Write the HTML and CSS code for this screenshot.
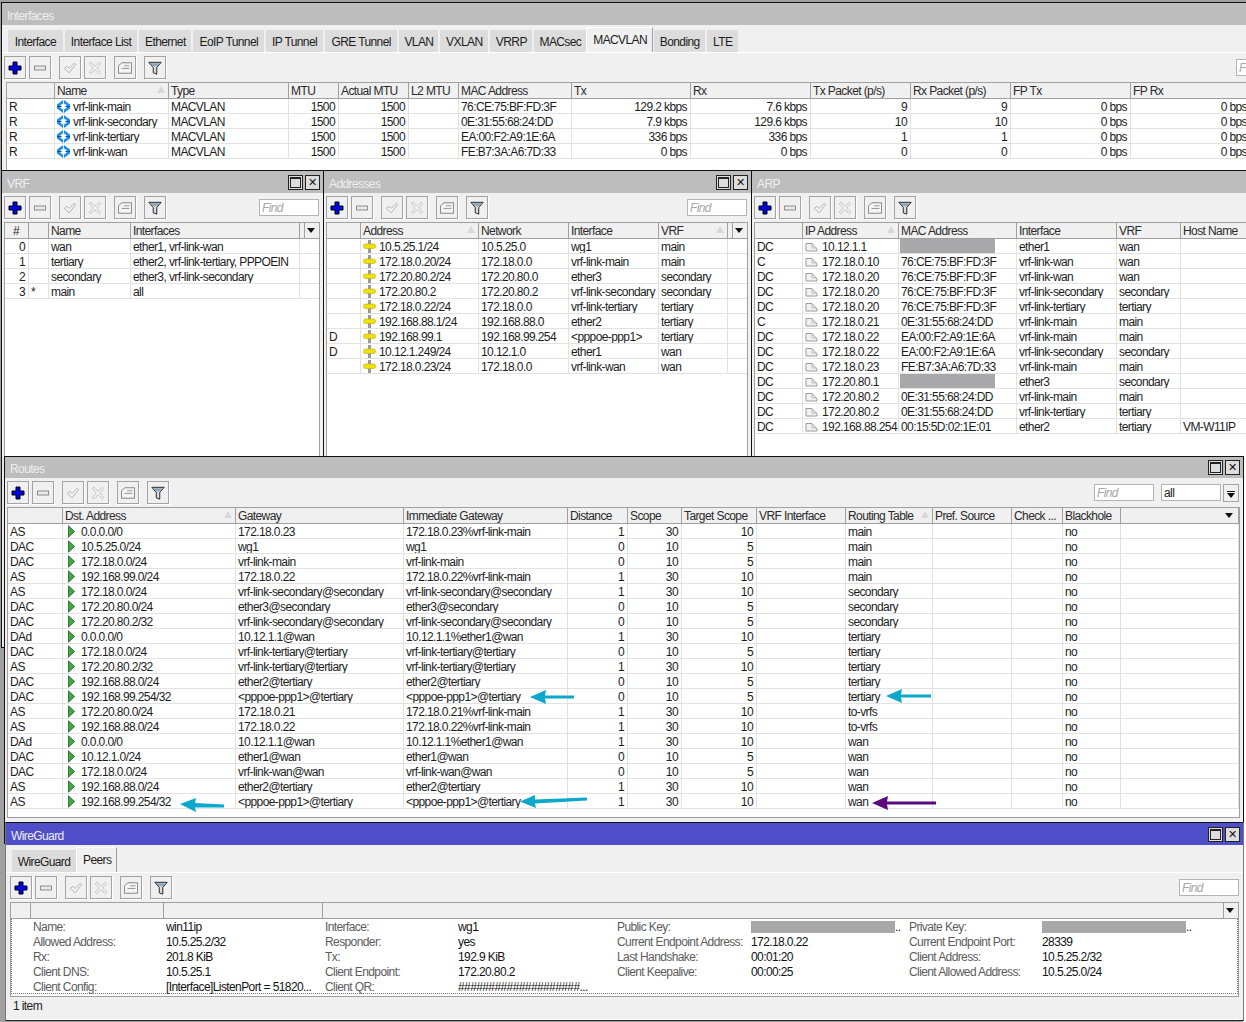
FILE: index.html
```html
<!DOCTYPE html>
<html>
<head>
<meta charset="UTF-8">
<title>WinBox</title>
<link rel="stylesheet" href="styles.css">
</head>
<body>
<svg class="sprite" xmlns="http://www.w3.org/2000/svg">
	<symbol id="add" viewBox="0 0 14 14"><path d="M5 1h4v4h4v4H9v4H5V9H1V5h4z" fill="#0000e6" stroke="#000" stroke-width="1"/></symbol>
	<symbol id="del" viewBox="0 0 14 14"><rect x="1.5" y="5" width="11" height="4" fill="#e8e8e8" stroke="#8c8c8c"/></symbol>
	<symbol id="chk" viewBox="0 0 16 16"><path d="M1.5 8.5l3-2.5 2.5 2.5 6-6 1.5 1.5-7.5 9.5z" fill="#f4f4f4" stroke="#a8a8a8"/></symbol>
	<symbol id="cross" viewBox="0 0 16 16"><path d="M3 1.5l5 4.5 5-4.5 1.5 1.5-4.5 5 4.5 5-1.5 1.5-5-4.5-5 4.5-1.5-1.5 4.5-5-4.5-5z" fill="#f4f4f4" stroke="#a0a0a0" stroke-dasharray="2 1"/></symbol>
	<symbol id="note" viewBox="0 0 16 14"><path d="M.5 13V4.500l4-3.500h11v12z" fill="#f4f4f4" stroke="#777"/><path d="M7 4.500h6M4 7.500h9" stroke="#888"/></symbol>
	<symbol id="funnel" viewBox="0 0 16 16"><path d="M1 1.500h14l-5 6v7.500l-4-1.500V7.500z" fill="#d5dde3" stroke="#111"/><path d="M2.500 2.500h11l-3 3.500h-5z" fill="#8fa6ba"/></symbol>
	<symbol id="iface" viewBox="0 0 13 13"><path d="M6 0L0 4.500v4L6 13V9.500L3.500 8V5L6 3.500zM7 0l6 4.500v4L7 13V9.500L9.500 8V5L7 3.500z" fill="#1c8fec"/><path d="M0 6.500h4.500M8.500 6.500H13" stroke="#0b4f9c"/></symbol>
	<symbol id="addr" viewBox="0 0 13 13"><path d="M5 0h3v13H5z" fill="#9a9a9a"/><rect x=".5" y="4" width="12" height="4.500" rx="2" fill="#f2e200" stroke="#b5ab20" stroke-width=".6"/></symbol>
	<symbol id="arp" viewBox="0 0 13 13"><path d="M1 11V3.500h6L12 9v2z" fill="#f2f2f2" stroke="#9a9a9a"/><path d="M7 3.500V8h5" fill="none" stroke="#b8b8b8"/></symbol>
	<symbol id="route" viewBox="0 0 8 14"><path d="M.5 .5L7.500 7 .5 13.500z" fill="#35b135" stroke="#3d5a3d"/></symbol>
</svg>

<div class="desk">
	<div class="strip"></div>
	<div class="under"></div>

	<div class="win win-if">
		<div class="title">Interfaces</div>
		<div class="tabs">
			<span class="tab wide">Interface</span>
			<span class="tab mid">Interface List</span>
			<span class="tab">Ethernet</span>
			<span class="tab mid">EoIP Tunnel</span>
			<span class="tab">IP Tunnel</span>
			<span class="tab wide">GRE Tunnel</span>
			<span class="tab thin">VLAN</span>
			<span class="tab">VXLAN</span>
			<span class="tab">VRRP</span>
			<span class="tab thin">MACsec</span>
			<span class="tab tab-on">MACVLAN</span>
			<span class="tab">Bonding</span>
			<span class="tab">LTE</span>
		</div>
		<div class="tools">
			<button class="btn"><svg class="ti"><use href="#add"/></svg></button>
			<button class="btn"><svg class="ti"><use href="#del"/></svg></button>
			<button class="btn sep"><svg class="ti"><use href="#chk"/></svg></button>
			<button class="btn"><svg class="ti"><use href="#cross"/></svg></button>
			<button class="btn sep"><svg class="ti"><use href="#note"/></svg></button>
			<button class="btn sep"><svg class="ti"><use href="#funnel"/></svg></button>
			<input class="find" placeholder="Find">
		</div>
		<div class="list">
			<table class="t-if">
				<colgroup><col><col><col><col><col><col><col><col><col><col><col><col><col></colgroup>
				<tr><th></th><th><span class="sort"></span>Name</th><th>Type</th><th>MTU</th><th>Actual MTU</th><th>L2 MTU</th><th>MAC Address</th><th>Tx</th><th>Rx</th><th>Tx Packet (p/s)</th><th>Rx Packet (p/s)</th><th>FP Tx</th><th>FP Rx</th></tr>
				<tr><td>R</td><td><svg class="ic"><use href="#iface"/></svg>vrf-link-main</td><td>MACVLAN</td><td class="n">1500</td><td class="n">1500</td><td></td><td>76:CE:75:BF:FD:3F</td><td class="n">129.2 kbps</td><td class="n">7.6 kbps</td><td class="n">9</td><td class="n">9</td><td class="n">0 bps</td><td class="n">0 bps</td></tr>
				<tr><td>R</td><td><svg class="ic"><use href="#iface"/></svg>vrf-link-secondary</td><td>MACVLAN</td><td class="n">1500</td><td class="n">1500</td><td></td><td>0E:31:55:68:24:DD</td><td class="n">7.9 kbps</td><td class="n">129.6 kbps</td><td class="n">10</td><td class="n">10</td><td class="n">0 bps</td><td class="n">0 bps</td></tr>
				<tr><td>R</td><td><svg class="ic"><use href="#iface"/></svg>vrf-link-tertiary</td><td>MACVLAN</td><td class="n">1500</td><td class="n">1500</td><td></td><td>EA:00:F2:A9:1E:6A</td><td class="n">336 bps</td><td class="n">336 bps</td><td class="n">1</td><td class="n">1</td><td class="n">0 bps</td><td class="n">0 bps</td></tr>
				<tr><td>R</td><td><svg class="ic"><use href="#iface"/></svg>vrf-link-wan</td><td>MACVLAN</td><td class="n">1500</td><td class="n">1500</td><td></td><td>FE:B7:3A:A6:7D:33</td><td class="n">0 bps</td><td class="n">0 bps</td><td class="n">0</td><td class="n">0</td><td class="n">0 bps</td><td class="n">0 bps</td></tr>
			</table>
		</div>
	</div>

	<div class="win win-vrf">
		<div class="title">VRF<span class="ctl"><i class="max"></i><i class="close">✕</i></span></div>
		<div class="tools">
			<button class="btn"><svg class="ti"><use href="#add"/></svg></button>
			<button class="btn"><svg class="ti"><use href="#del"/></svg></button>
			<button class="btn sep"><svg class="ti"><use href="#chk"/></svg></button>
			<button class="btn"><svg class="ti"><use href="#cross"/></svg></button>
			<button class="btn sep"><svg class="ti"><use href="#note"/></svg></button>
			<button class="btn sep"><svg class="ti"><use href="#funnel"/></svg></button>
			<input class="find" placeholder="Find">
		</div>
		<div class="list">
			<table class="t-vrf">
				<colgroup><col><col><col><col><col></colgroup>
				<tr><th class="c">#</th><th></th><th>Name</th><th>Interfaces</th><th class="more"><span class="dd boxed"></span></th></tr>
				<tr><td class="n">0</td><td></td><td>wan</td><td>ether1, vrf-link-wan</td><td></td></tr>
				<tr><td class="n">1</td><td></td><td>tertiary</td><td>ether2, vrf-link-tertiary, PPPOEIN</td><td></td></tr>
				<tr><td class="n">2</td><td></td><td>secondary</td><td>ether3, vrf-link-secondary</td><td></td></tr>
				<tr><td class="n">3</td><td>*</td><td>main</td><td>all</td><td></td></tr>
			</table>
		</div>
	</div>

	<div class="win win-addr">
		<div class="title">Addresses<span class="ctl"><i class="max"></i><i class="close">✕</i></span></div>
		<div class="tools">
			<button class="btn"><svg class="ti"><use href="#add"/></svg></button>
			<button class="btn"><svg class="ti"><use href="#del"/></svg></button>
			<button class="btn sep"><svg class="ti"><use href="#chk"/></svg></button>
			<button class="btn"><svg class="ti"><use href="#cross"/></svg></button>
			<button class="btn sep"><svg class="ti"><use href="#note"/></svg></button>
			<button class="btn sep"><svg class="ti"><use href="#funnel"/></svg></button>
			<input class="find" placeholder="Find">
		</div>
		<div class="list">
			<table class="t-addr">
				<colgroup><col><col><col><col><col><col></colgroup>
				<tr><th></th><th><span class="sort"></span>Address</th><th>Network</th><th>Interface</th><th><span class="sort"></span>VRF</th><th class="more"><span class="dd boxed"></span></th></tr>
				<tr><td></td><td><svg class="ic"><use href="#addr"/></svg>10.5.25.1/24</td><td>10.5.25.0</td><td>wg1</td><td>main</td><td></td></tr>
				<tr><td></td><td><svg class="ic"><use href="#addr"/></svg>172.18.0.20/24</td><td>172.18.0.0</td><td>vrf-link-main</td><td>main</td><td></td></tr>
				<tr><td></td><td><svg class="ic"><use href="#addr"/></svg>172.20.80.2/24</td><td>172.20.80.0</td><td>ether3</td><td>secondary</td><td></td></tr>
				<tr><td></td><td><svg class="ic"><use href="#addr"/></svg>172.20.80.2</td><td>172.20.80.2</td><td>vrf-link-secondary</td><td>secondary</td><td></td></tr>
				<tr><td></td><td><svg class="ic"><use href="#addr"/></svg>172.18.0.22/24</td><td>172.18.0.0</td><td>vrf-link-tertiary</td><td>tertiary</td><td></td></tr>
				<tr><td></td><td><svg class="ic"><use href="#addr"/></svg>192.168.88.1/24</td><td>192.168.88.0</td><td>ether2</td><td>tertiary</td><td></td></tr>
				<tr><td>D</td><td><svg class="ic"><use href="#addr"/></svg>192.168.99.1</td><td>192.168.99.254</td><td>&lt;pppoe-ppp1&gt;</td><td>tertiary</td><td></td></tr>
				<tr><td>D</td><td><svg class="ic"><use href="#addr"/></svg>10.12.1.249/24</td><td>10.12.1.0</td><td>ether1</td><td>wan</td><td></td></tr>
				<tr><td></td><td><svg class="ic"><use href="#addr"/></svg>172.18.0.23/24</td><td>172.18.0.0</td><td>vrf-link-wan</td><td>wan</td><td></td></tr>
			</table>
		</div>
	</div>

	<div class="win win-arp">
		<div class="title">ARP</div>
		<div class="tools">
			<button class="btn"><svg class="ti"><use href="#add"/></svg></button>
			<button class="btn"><svg class="ti"><use href="#del"/></svg></button>
			<button class="btn sep"><svg class="ti"><use href="#chk"/></svg></button>
			<button class="btn"><svg class="ti"><use href="#cross"/></svg></button>
			<button class="btn sep"><svg class="ti"><use href="#note"/></svg></button>
			<button class="btn sep"><svg class="ti"><use href="#funnel"/></svg></button>
		</div>
		<div class="list">
			<table class="t-arp">
				<colgroup><col><col><col><col><col><col></colgroup>
				<tr><th></th><th><span class="sort"></span>IP Address</th><th>MAC Address</th><th>Interface</th><th>VRF</th><th>Host Name</th></tr>
				<tr><td>DC</td><td><svg class="ic"><use href="#arp"/></svg>10.12.1.1</td><td><span class="hide"></span></td><td>ether1</td><td>wan</td><td></td></tr>
				<tr><td>C</td><td><svg class="ic"><use href="#arp"/></svg>172.18.0.10</td><td>76:CE:75:BF:FD:3F</td><td>vrf-link-wan</td><td>wan</td><td></td></tr>
				<tr><td>DC</td><td><svg class="ic"><use href="#arp"/></svg>172.18.0.20</td><td>76:CE:75:BF:FD:3F</td><td>vrf-link-wan</td><td>wan</td><td></td></tr>
				<tr><td>DC</td><td><svg class="ic"><use href="#arp"/></svg>172.18.0.20</td><td>76:CE:75:BF:FD:3F</td><td>vrf-link-secondary</td><td>secondary</td><td></td></tr>
				<tr><td>DC</td><td><svg class="ic"><use href="#arp"/></svg>172.18.0.20</td><td>76:CE:75:BF:FD:3F</td><td>vrf-link-tertiary</td><td>tertiary</td><td></td></tr>
				<tr><td>C</td><td><svg class="ic"><use href="#arp"/></svg>172.18.0.21</td><td>0E:31:55:68:24:DD</td><td>vrf-link-main</td><td>main</td><td></td></tr>
				<tr><td>DC</td><td><svg class="ic"><use href="#arp"/></svg>172.18.0.22</td><td>EA:00:F2:A9:1E:6A</td><td>vrf-link-main</td><td>main</td><td></td></tr>
				<tr><td>DC</td><td><svg class="ic"><use href="#arp"/></svg>172.18.0.22</td><td>EA:00:F2:A9:1E:6A</td><td>vrf-link-secondary</td><td>secondary</td><td></td></tr>
				<tr><td>DC</td><td><svg class="ic"><use href="#arp"/></svg>172.18.0.23</td><td>FE:B7:3A:A6:7D:33</td><td>vrf-link-main</td><td>main</td><td></td></tr>
				<tr><td>DC</td><td><svg class="ic"><use href="#arp"/></svg>172.20.80.1</td><td><span class="hide"></span></td><td>ether3</td><td>secondary</td><td></td></tr>
				<tr><td>DC</td><td><svg class="ic"><use href="#arp"/></svg>172.20.80.2</td><td>0E:31:55:68:24:DD</td><td>vrf-link-main</td><td>main</td><td></td></tr>
				<tr><td>DC</td><td><svg class="ic"><use href="#arp"/></svg>172.20.80.2</td><td>0E:31:55:68:24:DD</td><td>vrf-link-tertiary</td><td>tertiary</td><td></td></tr>
				<tr><td>DC</td><td><svg class="ic"><use href="#arp"/></svg>192.168.88.254</td><td>00:15:5D:02:1E:01</td><td>ether2</td><td>tertiary</td><td>VM-W11IP</td></tr>
			</table>
		</div>
	</div>

	<div class="win win-routes">
		<div class="title">Routes<span class="ctl"><i class="max"></i><i class="close">✕</i></span></div>
		<div class="tools">
			<button class="btn"><svg class="ti"><use href="#add"/></svg></button>
			<button class="btn"><svg class="ti"><use href="#del"/></svg></button>
			<button class="btn sep"><svg class="ti"><use href="#chk"/></svg></button>
			<button class="btn"><svg class="ti"><use href="#cross"/></svg></button>
			<button class="btn sep"><svg class="ti"><use href="#note"/></svg></button>
			<button class="btn sep"><svg class="ti"><use href="#funnel"/></svg></button>
			<input class="find" placeholder="Find">
			<input class="pick" value="all">
			<button class="drop"><span class="dn"></span></button>
		</div>
		<div class="list">
			<table class="t-routes">
				<colgroup><col><col><col><col><col><col><col><col><col><col><col><col><col></colgroup>
				<tr><th></th><th><span class="sort"></span>Dst. Address</th><th>Gateway</th><th>Immediate Gateway</th><th>Distance</th><th>Scope</th><th>Target Scope</th><th>VRF Interface</th><th><span class="sort"></span>Routing Table</th><th>Pref. Source</th><th>Check ...</th><th>Blackhole</th><th class="more"><span class="dd"></span></th></tr>
				<tr><td>AS</td><td><svg class="ic rt"><use href="#route"/></svg>0.0.0.0/0</td><td>172.18.0.23</td><td>172.18.0.23%vrf-link-main</td><td class="n">1</td><td class="n">30</td><td class="n">10</td><td></td><td>main</td><td></td><td></td><td>no</td><td></td></tr>
				<tr><td>DAC</td><td><svg class="ic rt"><use href="#route"/></svg>10.5.25.0/24</td><td>wg1</td><td>wg1</td><td class="n">0</td><td class="n">10</td><td class="n">5</td><td></td><td>main</td><td></td><td></td><td>no</td><td></td></tr>
				<tr><td>DAC</td><td><svg class="ic rt"><use href="#route"/></svg>172.18.0.0/24</td><td>vrf-link-main</td><td>vrf-link-main</td><td class="n">0</td><td class="n">10</td><td class="n">5</td><td></td><td>main</td><td></td><td></td><td>no</td><td></td></tr>
				<tr><td>AS</td><td><svg class="ic rt"><use href="#route"/></svg>192.168.99.0/24</td><td>172.18.0.22</td><td>172.18.0.22%vrf-link-main</td><td class="n">1</td><td class="n">30</td><td class="n">10</td><td></td><td>main</td><td></td><td></td><td>no</td><td></td></tr>
				<tr><td>AS</td><td><svg class="ic rt"><use href="#route"/></svg>172.18.0.0/24</td><td>vrf-link-secondary@secondary</td><td>vrf-link-secondary@secondary</td><td class="n">1</td><td class="n">30</td><td class="n">10</td><td></td><td>secondary</td><td></td><td></td><td>no</td><td></td></tr>
				<tr><td>DAC</td><td><svg class="ic rt"><use href="#route"/></svg>172.20.80.0/24</td><td>ether3@secondary</td><td>ether3@secondary</td><td class="n">0</td><td class="n">10</td><td class="n">5</td><td></td><td>secondary</td><td></td><td></td><td>no</td><td></td></tr>
				<tr><td>DAC</td><td><svg class="ic rt"><use href="#route"/></svg>172.20.80.2/32</td><td>vrf-link-secondary@secondary</td><td>vrf-link-secondary@secondary</td><td class="n">0</td><td class="n">10</td><td class="n">5</td><td></td><td>secondary</td><td></td><td></td><td>no</td><td></td></tr>
				<tr><td>DAd</td><td><svg class="ic rt"><use href="#route"/></svg>0.0.0.0/0</td><td>10.12.1.1@wan</td><td>10.12.1.1%ether1@wan</td><td class="n">1</td><td class="n">30</td><td class="n">10</td><td></td><td>tertiary</td><td></td><td></td><td>no</td><td></td></tr>
				<tr><td>DAC</td><td><svg class="ic rt"><use href="#route"/></svg>172.18.0.0/24</td><td>vrf-link-tertiary@tertiary</td><td>vrf-link-tertiary@tertiary</td><td class="n">0</td><td class="n">10</td><td class="n">5</td><td></td><td>tertiary</td><td></td><td></td><td>no</td><td></td></tr>
				<tr><td>AS</td><td><svg class="ic rt"><use href="#route"/></svg>172.20.80.2/32</td><td>vrf-link-tertiary@tertiary</td><td>vrf-link-tertiary@tertiary</td><td class="n">1</td><td class="n">30</td><td class="n">10</td><td></td><td>tertiary</td><td></td><td></td><td>no</td><td></td></tr>
				<tr><td>DAC</td><td><svg class="ic rt"><use href="#route"/></svg>192.168.88.0/24</td><td>ether2@tertiary</td><td>ether2@tertiary</td><td class="n">0</td><td class="n">10</td><td class="n">5</td><td></td><td>tertiary</td><td></td><td></td><td>no</td><td></td></tr>
				<tr><td>DAC</td><td><svg class="ic rt"><use href="#route"/></svg>192.168.99.254/32</td><td>&lt;pppoe-ppp1&gt;@tertiary</td><td>&lt;pppoe-ppp1&gt;@tertiary</td><td class="n">0</td><td class="n">10</td><td class="n">5</td><td></td><td>tertiary</td><td></td><td></td><td>no</td><td></td></tr>
				<tr><td>AS</td><td><svg class="ic rt"><use href="#route"/></svg>172.20.80.0/24</td><td>172.18.0.21</td><td>172.18.0.21%vrf-link-main</td><td class="n">1</td><td class="n">30</td><td class="n">10</td><td></td><td>to-vrfs</td><td></td><td></td><td>no</td><td></td></tr>
				<tr><td>AS</td><td><svg class="ic rt"><use href="#route"/></svg>192.168.88.0/24</td><td>172.18.0.22</td><td>172.18.0.22%vrf-link-main</td><td class="n">1</td><td class="n">30</td><td class="n">10</td><td></td><td>to-vrfs</td><td></td><td></td><td>no</td><td></td></tr>
				<tr><td>DAd</td><td><svg class="ic rt"><use href="#route"/></svg>0.0.0.0/0</td><td>10.12.1.1@wan</td><td>10.12.1.1%ether1@wan</td><td class="n">1</td><td class="n">30</td><td class="n">10</td><td></td><td>wan</td><td></td><td></td><td>no</td><td></td></tr>
				<tr><td>DAC</td><td><svg class="ic rt"><use href="#route"/></svg>10.12.1.0/24</td><td>ether1@wan</td><td>ether1@wan</td><td class="n">0</td><td class="n">10</td><td class="n">5</td><td></td><td>wan</td><td></td><td></td><td>no</td><td></td></tr>
				<tr><td>DAC</td><td><svg class="ic rt"><use href="#route"/></svg>172.18.0.0/24</td><td>vrf-link-wan@wan</td><td>vrf-link-wan@wan</td><td class="n">0</td><td class="n">10</td><td class="n">5</td><td></td><td>wan</td><td></td><td></td><td>no</td><td></td></tr>
				<tr><td>AS</td><td><svg class="ic rt"><use href="#route"/></svg>192.168.88.0/24</td><td>ether2@tertiary</td><td>ether2@tertiary</td><td class="n">1</td><td class="n">30</td><td class="n">10</td><td></td><td>wan</td><td></td><td></td><td>no</td><td></td></tr>
				<tr><td>AS</td><td><svg class="ic rt"><use href="#route"/></svg>192.168.99.254/32</td><td>&lt;pppoe-ppp1&gt;@tertiary</td><td>&lt;pppoe-ppp1&gt;@tertiary</td><td class="n">1</td><td class="n">30</td><td class="n">10</td><td></td><td>wan</td><td></td><td></td><td>no</td><td></td></tr>
			</table>
		</div>
	</div>

	<div class="win win-wg">
		<div class="title">WireGuard<span class="ctl"><i class="max"></i><i class="close">✕</i></span></div>
		<div class="tabs">
			<span class="tab">WireGuard</span>
			<span class="tab tab-on">Peers</span>
		</div>
		<div class="tools">
			<button class="btn"><svg class="ti"><use href="#add"/></svg></button>
			<button class="btn"><svg class="ti"><use href="#del"/></svg></button>
			<button class="btn sep"><svg class="ti"><use href="#chk"/></svg></button>
			<button class="btn"><svg class="ti"><use href="#cross"/></svg></button>
			<button class="btn sep"><svg class="ti"><use href="#note"/></svg></button>
			<button class="btn sep"><svg class="ti"><use href="#funnel"/></svg></button>
			<input class="find" placeholder="Find">
		</div>
		<div class="list">
			<table class="t-wg">
				<colgroup><col><col><col><col></colgroup>
				<tr><th></th><th></th><th></th><th class="more"><span class="dd boxed"></span></th></tr>
			</table>
			<div class="peer">
				<span class="k">Name:</span><span>win11ip</span>
				<span class="k">Interface:</span><span>wg1</span>
				<span class="k">Public Key:</span><span><span class="key"></span>..</span>
				<span class="k">Private Key:</span><span><span class="key"></span>..</span>

				<span class="k">Allowed Address:</span><span>10.5.25.2/32</span>
				<span class="k">Responder:</span><span>yes</span>
				<span class="k">Current Endpoint Address:</span><span>172.18.0.22</span>
				<span class="k">Current Endpoint Port:</span><span>28339</span>

				<span class="k">Rx:</span><span>201.8 KiB</span>
				<span class="k">Tx:</span><span>192.9 KiB</span>
				<span class="k">Last Handshake:</span><span>00:01:20</span>
				<span class="k">Client Address:</span><span>10.5.25.2/32</span>

				<span class="k">Client DNS:</span><span>10.5.25.1</span>
				<span class="k">Client Endpoint:</span><span>172.20.80.2</span>
				<span class="k">Client Keepalive:</span><span>00:00:25</span>
				<span class="k">Client Allowed Address:</span><span>10.5.25.0/24</span>

				<span class="k">Client Config:</span><span>[Interface]ListenPort = 51820...</span>
				<span class="k">Client QR:</span><span>####################...</span>
			</div>
		</div>
		<div class="status">1 item</div>
	</div>

	<!-- arrows drawn over the routes list -->
	<svg class="arrow a1" viewBox="0 0 44 14"><path d="M44 5.500v3H15l1 5.500L0 7 16 0l-1 5.500z" fill="#0ba8cc"/></svg>
	<svg class="arrow a2" viewBox="0 0 45 14"><path d="M45 5.500v3H15l1 5.500L0 7 16 0l-1 5.500z" fill="#0ba8cc"/></svg>
	<svg class="arrow a3" viewBox="0 0 44 14"><path d="M44 6.500v3H15l1 4.500L0 6l16-6-1 5z" fill="#0ba8cc"/></svg>
	<svg class="arrow a4" viewBox="0 0 67 14"><path d="M67 3.500v3L15 9.500l1 4.500L0 7.500 15 1v4.500z" fill="#0ba8cc"/></svg>
	<svg class="arrow a5" viewBox="0 0 64 14"><path d="M64 5.500v3H15l1 5.500L0 7 16 0l-1 5.500z" fill="#5a0a7e"/></svg>
</div>
</body>
</html>
```

FILE: styles.css
```css
html, body {
	margin: 0;
	padding: 0;
	overflow: hidden;
}

body {
	font-family: "Liberation Sans", Arial, sans-serif;
	font-size: 12px;
	letter-spacing: -0.6px;
	color: #1c1c1c;
}

.sprite {
	position: absolute;
	width: 0;
	height: 0;
}

.desk {
	position: relative;
	width: 1246px;
	height: 1022px;
	overflow: hidden;
	background: #a0a0a0;
}

.strip {
	position: absolute;
	left: 1243px;
	top: 456px;
	width: 3px;
	height: 566px;
	background: #fff;
}

.under {
	position: absolute;
	left: 1px;
	top: 450px;
	width: 6px;
	height: 197px;
	background: #e8e8e8;
	border-left: 1px solid #111;
	border-bottom: 1px solid #111;
}

/* windows sit on the desktop at their own place */
.win {
	position: absolute;
	display: flex;
	flex-direction: column;
	box-sizing: border-box;
	overflow: hidden;
	background: #f0f0f0;
	border-top: 1px solid #111;
	border-left: 1px solid #111;
}

.win-if {
	left: 1px;
	top: 2px;
	width: 1245px;
	height: 168px;
}

.win-vrf {
	left: 1px;
	top: 170px;
	width: 322px;
	height: 286px;
}

.win-addr {
	left: 323px;
	top: 170px;
	width: 428px;
	height: 286px;
}

.win-arp {
	left: 751px;
	top: 170px;
	width: 495px;
	height: 286px;
}

.win-routes {
	left: 4px;
	top: 456px;
	width: 1240px;
	height: 388px;
	border-right: 1px solid #111;
	border-bottom: 1px solid #111;
}

.win-wg {
	left: 5px;
	top: 822px;
	width: 1239px;
	height: 199px;
	border-left-color: #777;
	border-right: 1px solid #777;
	border-bottom: 1px solid #222;
}

.title {
	flex: none;
	display: flex;
	align-items: flex-start;
	justify-content: space-between;
	height: 22px;
	padding: 0 3px 0 5px;
	line-height: 27px;
	overflow: hidden;
	background: #bdbdbd;
	color: #efefef;
}

.win-routes .title {
	height: 21px;
	line-height: 25px;
}

.win-wg .title {
	background: #4f50c9;
	color: #eee;
}

.ctl {
	display: flex;
	gap: 2px;
	margin-top: 4px;
}

.win-routes .ctl {
	margin-top: 3px;
}

.ctl i {
	display: block;
	box-sizing: border-box;
	width: 15px;
	height: 15px;
	border: 1px solid #222;
	background: #ddd;
	color: #111;
	font: normal bold 11px/13px "DejaVu Sans", sans-serif;
	letter-spacing: 0;
	text-align: center;
}

.ctl .max::after {
	content: "";
	display: block;
	box-sizing: border-box;
	width: 11px;
	height: 11px;
	margin: 1px;
	border: 1px solid #222;
	border-top-width: 2px;
}

.tabs {
	flex: none;
	display: flex;
	align-items: flex-end;
	height: 28px;
	box-sizing: border-box;
	padding: 0 0 0 6px;
	border-bottom: 1px solid #fff;
}

.tab {
	height: 22px;
	line-height: 25px;
	padding: 0 5.7px;
	margin-right: 2px;
	background: #dcdcdc;
}

.tab.wide {
	padding: 0 6.7px;
}

.tab.mid {
	padding: 0 6.2px;
}

.tab.thin {
	padding: 0 5px;
}

.tab-on {
	height: 25px;
	line-height: 25px;
	margin: 0 1px 0 -2px;
	padding: 0 5px 0 6px;
	box-sizing: border-box;
	background: #f0f0f0;
	border-top: 1px solid #fff;
	border-left: 1px solid #fff;
	border-right: 1px solid #a0a0a0;
}

.tools {
	flex: none;
	display: flex;
	align-items: center;
	height: 29px;
	padding-left: 2px;
}

.btn {
	flex: none;
	display: flex;
	align-items: center;
	justify-content: center;
	box-sizing: border-box;
	width: 22px;
	height: 23px;
	padding: 0;
	margin-right: 3px;
	background: #f0f0f0;
	border: 1px solid #a3a3a3;
	box-shadow: 1px 1px 0 #fff;
}

.btn.sep {
	margin-left: 5px;
}

.ti {
	width: 14px;
	height: 14px;
}

.find, .pick {
	box-sizing: border-box;
	width: 60px;
	height: 17px;
	padding: 0 2px;
	border: 1px solid #b4b4b4;
	background: #fff;
	font: 12px "Liberation Sans", Arial, sans-serif;
	letter-spacing: -0.6px;
	color: #1c1c1c;
	outline: none;
}

.find {
	margin-left: auto;
	margin-right: 4px;
	font-style: italic;
}

.find::placeholder {
	color: #a6a6a6;
	opacity: 1;
}

.win-if .tools {
	width: 1296px;
}

.win-routes .find {
	margin-right: 7px;
}

.pick {
	margin-right: 2px;
}

.drop {
	flex: none;
	box-sizing: border-box;
	width: 16px;
	height: 18px;
	padding: 0;
	margin-right: 4px;
	background: #f0f0f0;
	border: 1px solid #a3a3a3;
}

.dn {
	display: block;
	box-sizing: content-box;
	width: 0;
	height: 0;
	margin: 6px auto 0;
	border: 4px solid transparent;
	border-top: 5px solid #111;
	border-bottom: 0;
	position: relative;
}

.dn::before {
	content: "";
	position: absolute;
	left: -4px;
	top: -7px;
	width: 8px;
	height: 1px;
	background: #111;
}

.win-wg .tools {
	padding-left: 4px;
}

.list {
	flex: 1;
	min-height: 0;
	margin: 0 2px;
	overflow: hidden;
	background: #fff;
	border-left: 1px solid #a0a0a0;
}

.win-vrf .list, .win-addr .list {
	margin-right: 3px;
	border-right: 1px solid #a0a0a0;
}

.win-arp .list {
	margin-right: 0;
}

.win-if .list {
	margin: 0 0 0 4px;
}

.win-routes .list {
	margin: 0 3px 25px 2px;
	border-right: 1px solid #a0a0a0;
	border-bottom: 1px solid #a0a0a0;
}

.win-wg .list {
	flex: none;
	box-sizing: border-box;
	height: 95px;
	margin: 0 4px;
	border-right: 1px solid #a0a0a0;
	border-bottom: 1px solid #a0a0a0;
}

table {
	table-layout: fixed;
	border-collapse: separate;
	border-spacing: 0;
}

th, td {
	box-sizing: border-box;
	padding: 1px 3px 0 2px;
	overflow: hidden;
	white-space: nowrap;
	text-align: left;
}

th {
	height: 17px;
	line-height: 14px;
	font-weight: normal;
	color: #2a2a2a;
	background: #f0f0f0;
	border-top: 1px solid #a0a0a0;
	border-bottom: 1px solid #a0a0a0;
	border-right: 1px solid #a0a0a0;
}

td {
	height: 15px;
	padding-top: 2px;
	line-height: 12px;
	border-right: 1px solid #e2e2e2;
	border-bottom: 1px solid #e2e2e2;
}

td.n {
	text-align: right;
}

th.c {
	text-align: center;
}

th.more {
	padding: 0;
}

.dd {
	float: right;
	box-sizing: border-box;
	width: 15px;
	height: 15px;
	position: relative;
}

.dd.boxed {
	border-left: 1px solid #a0a0a0;
}

.dd::after {
	content: "";
	position: absolute;
	left: 2px;
	top: 5px;
	border: 4px solid transparent;
	border-top: 5px solid #111;
	border-bottom: 0;
}

.sort {
	float: right;
	width: 0;
	height: 0;
	margin: 2px 0 0 0;
	border: 4px solid transparent;
	border-top: 0;
	border-bottom: 7px solid #d8d8d8;
}

.ic {
	width: 13px;
	height: 13px;
	margin: -1px 3px 0 0;
	vertical-align: top;
}

.rt {
	width: 7px;
	margin: -1px 6px 0 3px;
}

.win-arp .ic {
	margin-right: 4px;
}

.hide {
	display: block;
	width: 95px;
	height: 14px;
	margin: -2px 0 0 -1px;
	background: #a8a8ab;
}

.t-if { width: 1244px; }
.t-if col:nth-child(1) { width: 48px; }
.t-if col:nth-child(2) { width: 114px; }
.t-if col:nth-child(3) { width: 120px; }
.t-if col:nth-child(4) { width: 50px; }
.t-if col:nth-child(5) { width: 70px; }
.t-if col:nth-child(6) { width: 50px; }
.t-if col:nth-child(7) { width: 113px; }
.t-if col:nth-child(8) { width: 119px; }
.t-if col:nth-child(9) { width: 120px; }
.t-if col:nth-child(10) { width: 100px; }
.t-if col:nth-child(11) { width: 100px; }
.t-if col:nth-child(12) { width: 120px; }
.t-if col:nth-child(13) { width: 120px; }

.t-vrf { width: 315px; }
.t-vrf col:nth-child(1) { width: 24px; }
.t-vrf col:nth-child(2) { width: 20px; }
.t-vrf col:nth-child(3) { width: 82px; }
.t-vrf col:nth-child(4) { width: 169px; }
.t-vrf col:nth-child(5) { width: 20px; }

.t-addr { width: 421px; }
.t-addr col:nth-child(1) { width: 34px; }
.t-addr col:nth-child(2) { width: 118px; }
.t-addr col:nth-child(3) { width: 90px; }
.t-addr col:nth-child(4) { width: 90px; }
.t-addr col:nth-child(5) { width: 69px; }
.t-addr col:nth-child(6) { width: 20px; }

.t-arp { width: 526px; }
.t-arp col:nth-child(1) { width: 48px; }
.t-arp col:nth-child(2) { width: 96px; }
.t-arp col:nth-child(3) { width: 118px; }
.t-arp col:nth-child(4) { width: 100px; }
.t-arp col:nth-child(5) { width: 64px; }
.t-arp col:nth-child(6) { width: 100px; }

.t-routes { width: 1231px; }
.t-routes col:nth-child(1) { width: 55px; }
.t-routes col:nth-child(2) { width: 173px; }
.t-routes col:nth-child(3) { width: 168px; }
.t-routes col:nth-child(4) { width: 164px; }
.t-routes col:nth-child(5) { width: 60px; }
.t-routes col:nth-child(6) { width: 54px; }
.t-routes col:nth-child(7) { width: 75px; }
.t-routes col:nth-child(8) { width: 89px; }
.t-routes col:nth-child(9) { width: 87px; }
.t-routes col:nth-child(10) { width: 79px; }
.t-routes col:nth-child(11) { width: 51px; }
.t-routes col:nth-child(12) { width: 58px; }
.t-routes col:nth-child(13) { width: 118px; }

.t-wg { width: 1228px; }
.t-wg col:nth-child(1) { width: 20px; }
.t-wg col:nth-child(2) { width: 133px; }
.t-wg col:nth-child(3) { width: 159px; }
.t-wg col:nth-child(4) { width: 916px; }

.peer {
	display: grid;
	grid-template-columns: 133px 159px 133px 159px 134px 158px 133px 1fr;
	grid-auto-rows: 15px;
	box-sizing: border-box;
	height: 75px;
	padding: 1px 0 0 21px;
	line-height: 15px;
	white-space: nowrap;
	border: 1px dotted #777;
	border-top: 0;
	color: #111;
}

.k {
	color: #5c5c5c;
}

.key {
	display: inline-block;
	width: 144px;
	height: 12px;
	vertical-align: -2px;
	background: #a8a8ab;
}

.status {
	flex: 1;
	margin: 0 4px;
	padding: 1px 3px 0;
	line-height: 16px;
	border-bottom: 1px solid #fff;
}

.arrow {
	position: absolute;
	height: 14px;
}

.a1 { left: 530px; top: 690px; width: 44px; }
.a2 { left: 886px; top: 689px; width: 45px; }
.a3 { left: 180px; top: 798px; width: 44px; }
.a4 { left: 520px; top: 794px; width: 67px; }
.a5 { left: 872px; top: 796px; width: 64px; }
```
